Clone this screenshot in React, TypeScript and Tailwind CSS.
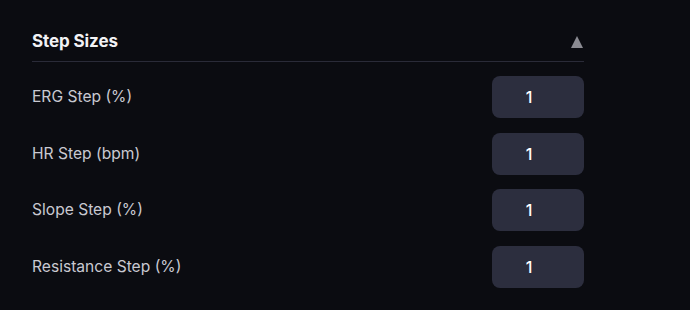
const rows = [
  { label: "ERG Step (%)", value: 1 },
  { label: "HR Step (bpm)", value: 1 },
  { label: "Slope Step (%)", value: 1 },
  { label: "Resistance Step (%)", value: 1 },
]

export default function App() {
  return (
    <div className="w-[690px] h-[310px] bg-[#0b0c11] overflow-hidden font-['Inter',sans-serif]">
      <div className="w-[552px] ml-8 pt-7">
        {/* section header */}
        <div className="h-7 flex items-center justify-between">
          <span className="text-[17px] font-bold text-[#f2f2f5] tracking-[-0.1px]">Step Sizes</span>
          <svg width="12" height="12" viewBox="0 0 12 12" className="mr-[1px]">
            <path d="M6 0 L12 12 L0 12 Z" fill="#8b8b92" />
          </svg>
        </div>
        <div className="mt-[5px] h-px bg-[#2a2b38]" />

        <div className="mt-[14px] flex flex-col gap-[14.5px]">
          {rows.map((r) => (
            <div key={r.label} className="flex items-center justify-between">
              <span className="text-[15.6px] text-[#c9c9d1]">{r.label}</span>
              <input
                type="text"
                defaultValue={r.value}
                className="w-[92px] h-[42px] rounded-lg bg-[#2c2e3e] text-white text-[16px] font-medium text-center pr-[18px] outline-none"
              />
            </div>
          ))}
        </div>
      </div>
    </div>
  )
}
